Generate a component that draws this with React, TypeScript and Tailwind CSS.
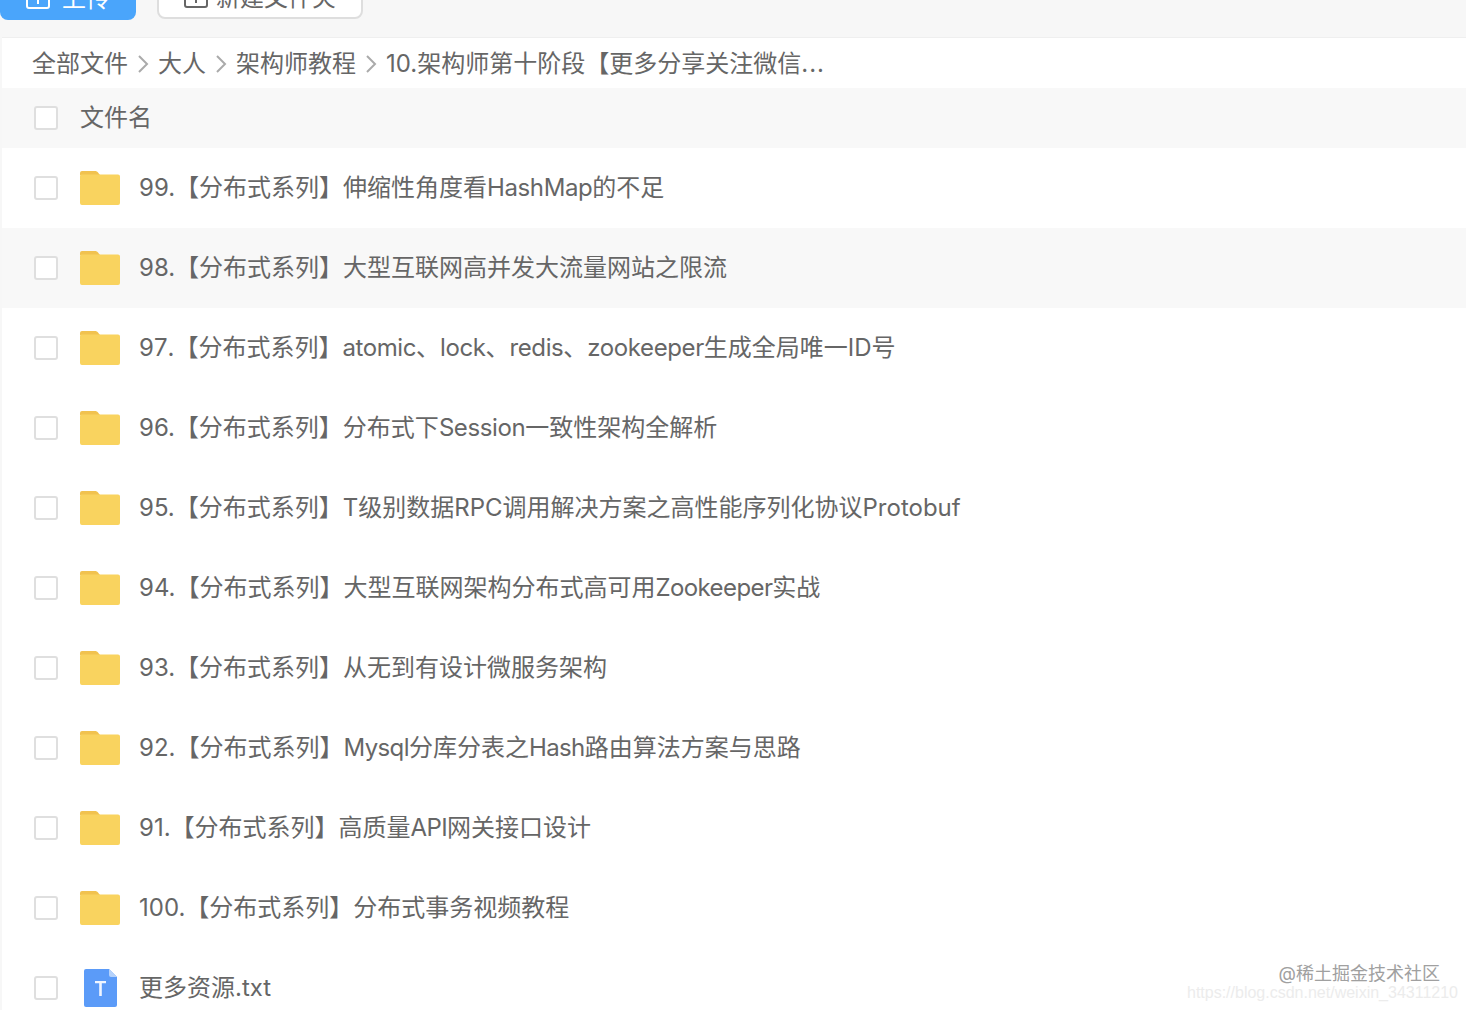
import React from "react";

const FONT = "font-['Inter','Noto_Sans_CJK_SC',sans-serif]";

// Latin runs sit a little narrower in the picture than Inter sets them
const L = ({ children, tight }: { children: React.ReactNode; tight?: boolean }) => (
  <span className={tight ? "tracking-[-0.6px]" : "tracking-[-0.4px]"}>{children}</span>
);

const rows: { id: string; name: React.ReactNode }[] = [
  { id: "99", name: <>99.【分布式系列】伸缩性角度看<L>HashMap</L>的不足</> },
  { id: "98", name: <>98.【分布式系列】大型互联网高并发大流量网站之限流</> },
  {
    id: "97",
    name: (
      <>
        <span className="[font-kerning:none]">97.</span>【分布式系列】<L>atomic</L>、<L>lock</L>、<L>redis</L>、<L>zookeeper</L>生成全局唯一ID号
      </>
    ),
  },
  { id: "96", name: <>96.【分布式系列】分布式下<L>Session</L>一致性架构全解析</> },
  { id: "95", name: <>95.【分布式系列】T级别数据RPC调用解决方案之高性能序列化协议Protobuf</> },
  { id: "94", name: <>94.【分布式系列】大型互联网架构分布式高可用<L tight>Zookeeper</L>实战</> },
  { id: "93", name: <>93.【分布式系列】从无到有设计微服务架构</> },
  { id: "92", name: <>92.【分布式系列】<L tight>Mysql</L>分库分表之<L tight>Hash</L>路由算法方案与思路</> },
  { id: "91", name: <>91.【分布式系列】高质量<L tight>API</L>网关接口设计</> },
  { id: "100", name: <>100.【分布式系列】分布式事务视频教程</> },
];

const crumbs = ["全部文件", "大人", "架构师教程"];

const Checkbox = () => (
  <span className="block w-6 h-6 shrink-0 rounded-[3px] border-[2px] border-[#dfdfdf] bg-white" />
);

const FolderIcon = () => (
  <svg width="42" height="36" viewBox="0 0 42 36" className="shrink-0">
    <path d="M1 3a2 2 0 0 1 2-2h13c1.500 0 2 .5 3 1.500L21 5H1z" fill="#f1c24f" />
    <path d="M1 6a1.500 1.500 0 0 1 1.500-1.500H39a2 2 0 0 1 2 2V33a2 2 0 0 1-2 2H3a2 2 0 0 1-2-2z" fill="#f9d35f" />
  </svg>
);

const TxtIcon = () => (
  <svg width="33" height="38" viewBox="0 0 33 38" className="shrink-0">
    <path d="M2 0h23l8 8v28a2 2 0 0 1-2 2H2a2 2 0 0 1-2-2V2a2 2 0 0 1 2-2z" fill="#5b9bf8" />
    <path d="M25 0l8 8h-6a2 2 0 0 1-2-2z" fill="#b5d2fb" />
    <path d="M11 12h11v2.200h-4.200V27h-2.600V14.200H11z" fill="#f0f6ff" />
  </svg>
);

const UploadGlyph = ({ color }: { color: string }) => (
  <svg width="24" height="20" viewBox="0 0 24 20" fill="none" stroke={color} strokeWidth="2">
    <rect x="1" y="1" width="22" height="18" rx="2" />
    <path d="M12 15V6M8 10l4-4 4 4" />
  </svg>
);

export default function App() {
  return (
    <div className={`w-[1466px] h-[1010px] overflow-hidden relative bg-[#f7f7f7] ${FONT}`}>
      {/* Toolbar, cut off at the top of the picture */}
      <div className="h-[37px] pb-[17px] flex items-end overflow-hidden">
        <button className="shrink-0 w-[136px] h-[42px] rounded-[8px] bg-[#4aa5fb] text-white text-[24px] flex items-center justify-center gap-3">
          <UploadGlyph color="#ffffff" />
          <span>上传</span>
        </button>
        <button className="shrink-0 ml-[21px] w-[206px] h-[42px] rounded-[8px] border-2 border-[#dedede] bg-white text-[#666666] text-[24px] flex items-center justify-center gap-2 mb-[1px]">
          <UploadGlyph color="#666666" />
          <span>新建文件夹</span>
        </button>
      </div>

      {/* File panel */}
      <div className="ml-[2px] h-[973px] bg-white border-t border-[#efefef]">
        <div className="h-[50px] pt-[2px] pl-[30px] flex items-center text-[24px] text-[#666666]">
          {crumbs.map((crumb) => (
            <React.Fragment key={crumb}>
              <span>{crumb}</span>
              <svg width="30" height="24" viewBox="0 0 30 24" fill="none" stroke="#aaaaaa" strokeWidth="2">
                <path d="M11 4l8 8-8 8" />
              </svg>
            </React.Fragment>
          ))}
          <span>
            10.架构师第十阶段【更多分享关注微信<span className="tracking-[1px]">...</span>
          </span>
        </div>

        <div className="h-[60px] bg-[#f8f8f8] pl-[32px] flex items-center text-[24px] text-[#666666]">
          <Checkbox />
          <span className="ml-[22px]">文件名</span>
        </div>

        {rows.map((row) => (
          <div
            key={row.id}
            className={`h-[80px] pl-[32px] flex items-center text-[24px] text-[#666666] ${row.id === "98" ? "bg-[#f8f8f8]" : ""}`}
          >
            <Checkbox />
            <span className="ml-[21px] flex w-[42px] justify-center">
              <FolderIcon />
            </span>
            <span className="ml-[18px] whitespace-nowrap">{row.name}</span>
          </div>
        ))}

        <div className="h-[80px] pl-[32px] flex items-center text-[24px] text-[#666666]">
          <Checkbox />
          <span className="ml-[21px] flex w-[42px] justify-center">
            <TxtIcon />
          </span>
          <span className="ml-[18px] whitespace-nowrap">更多资源.txt</span>
        </div>
      </div>

      {/* Image watermarks */}
      <div className="absolute right-[26px] top-[962px] text-[18px] leading-[24px] text-[#a0a0a0]">@稀土掘金技术社区</div>
      <div className="absolute right-[8px] top-[982px] text-[16px] leading-[22px] text-[#ececec] font-['Liberation_Sans',sans-serif]">
        https://blog.csdn.net/weixin_34311210
      </div>
    </div>
  );
}
